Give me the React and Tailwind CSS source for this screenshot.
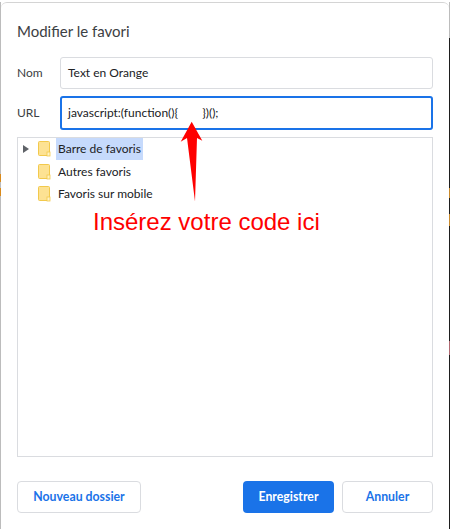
import React from 'react';

const Folder = () => (
  <svg width="13" height="16" viewBox="0 0 13 16" className="shrink-0">
    <rect x="0.5" y="0.5" width="11" height="14" rx="1" fill="#fde293" stroke="#f2c94c" />
    <rect x="9" y="11" width="3" height="4" fill="#fff3c4" stroke="#f2c94c" strokeWidth="0.8" />
  </svg>
);

const TreeRow = ({ label, selected, arrow }) => (
  <div className="flex h-[22.5px] items-center">
    <div className="flex w-[18px] shrink-0 items-center pl-[3px]">
      {arrow && (
        <svg width="6" height="8" viewBox="0 0 6 8">
          <path d="M0 0L6 4L0 8Z" fill="#5f6368" />
        </svg>
      )}
    </div>
    <Folder />
    <span className={`ml-[5px] px-[2px] leading-[22px] ${selected ? 'bg-[#c6dafc]' : ''}`}>{label}</span>
  </div>
);

const Field = ({ label, value, focused }) => (
  <div className={`flex items-center ${focused ? 'h-[34px]' : 'h-[32px]'}`}>
    <label className="w-[43px] shrink-0 text-[#3c4043]">{label}</label>
    <div
      className={`flex h-full flex-1 items-center rounded-[3px] ${
        focused ? 'border-2 border-[#1a73e8] pl-[6px]' : 'border border-[#dadce0] pl-[7px]'
      }`}
    >
      {value}
    </div>
  </div>
);

export default function App() {
  return (
    <div className="relative flex h-[529px] w-[450px] overflow-hidden bg-white pt-[2px] font-['Lato',sans-serif] text-[12px] text-[#202124]">
      <div className="flex w-px shrink-0 flex-col bg-[#bcbcbc]">
        <div className="mt-[172px] h-[8px] bg-[#d98a1c]" />
        <div className="mt-[6px] h-[8px] bg-[#d98a1c]" />
      </div>

      <div className="flex flex-1 flex-col rounded-t-[6px] border-t border-[#d4d4d4] bg-white pb-[16px] pl-[16px] pr-[16px] pt-[18px]">
        <h1 className="text-[15px] font-normal leading-[20px] text-[#3c4043]">Modifier le favori</h1>
        <div className="mt-[16px] flex flex-col gap-[7px]">
          <Field label="Nom" value="Text en Orange" />
          <Field focused label="URL" value={<span>javascript:(function(){'{'}<span className="inline-block w-[24px]" />{'}'})();</span>} />
        </div>
        <div className="mt-[7px] flex-1 border border-[#dadce0] pl-[2px]">
          <TreeRow arrow selected label="Barre de favoris" />
          <TreeRow label="Autres favoris" />
          <TreeRow label="Favoris sur mobile" />
        </div>
        <div className="mt-[24px] flex h-[32px] text-[12.3px] font-bold">
          <button className="w-[124px] rounded-[4px] border border-[#dadce0] text-[#1a73e8]">Nouveau dossier</button>
          <button className="ml-auto w-[91px] rounded-[4px] bg-[#1a73e8] text-white">Enregistrer</button>
          <button className="ml-[8px] w-[91px] rounded-[4px] border border-[#dadce0] text-[#1a73e8]">Annuler</button>
        </div>
      </div>

      <div className="flex w-px shrink-0 flex-col bg-[#1e1e1e]">
        <div className="h-[36px] bg-[#bcbcbc]" />
        <div className="mt-[150px] h-[10px] bg-[#c98a2c]" />
        <div className="mt-[16px] h-[12px] bg-[#c98a2c]" />
        <div className="mt-[115px] h-[14px] bg-[#b06a72]" />
      </div>

      {/* annotation over the dialog */}
      <svg className="absolute left-[180px] top-[120px]" width="24" height="84" viewBox="0 0 24 84">
        <path d="M11.7 1.7 L22.3 20.7 L17 18 L15 81.5 L7 18 L0.7 21.7 Z" fill="#fe0000" />
      </svg>
      <div className="absolute left-[93px] top-[208px] font-['Liberation_Sans',sans-serif] text-[24px] leading-[28px] text-[#fe0000]">
        Insérez votre code ici
      </div>
    </div>
  );
}
